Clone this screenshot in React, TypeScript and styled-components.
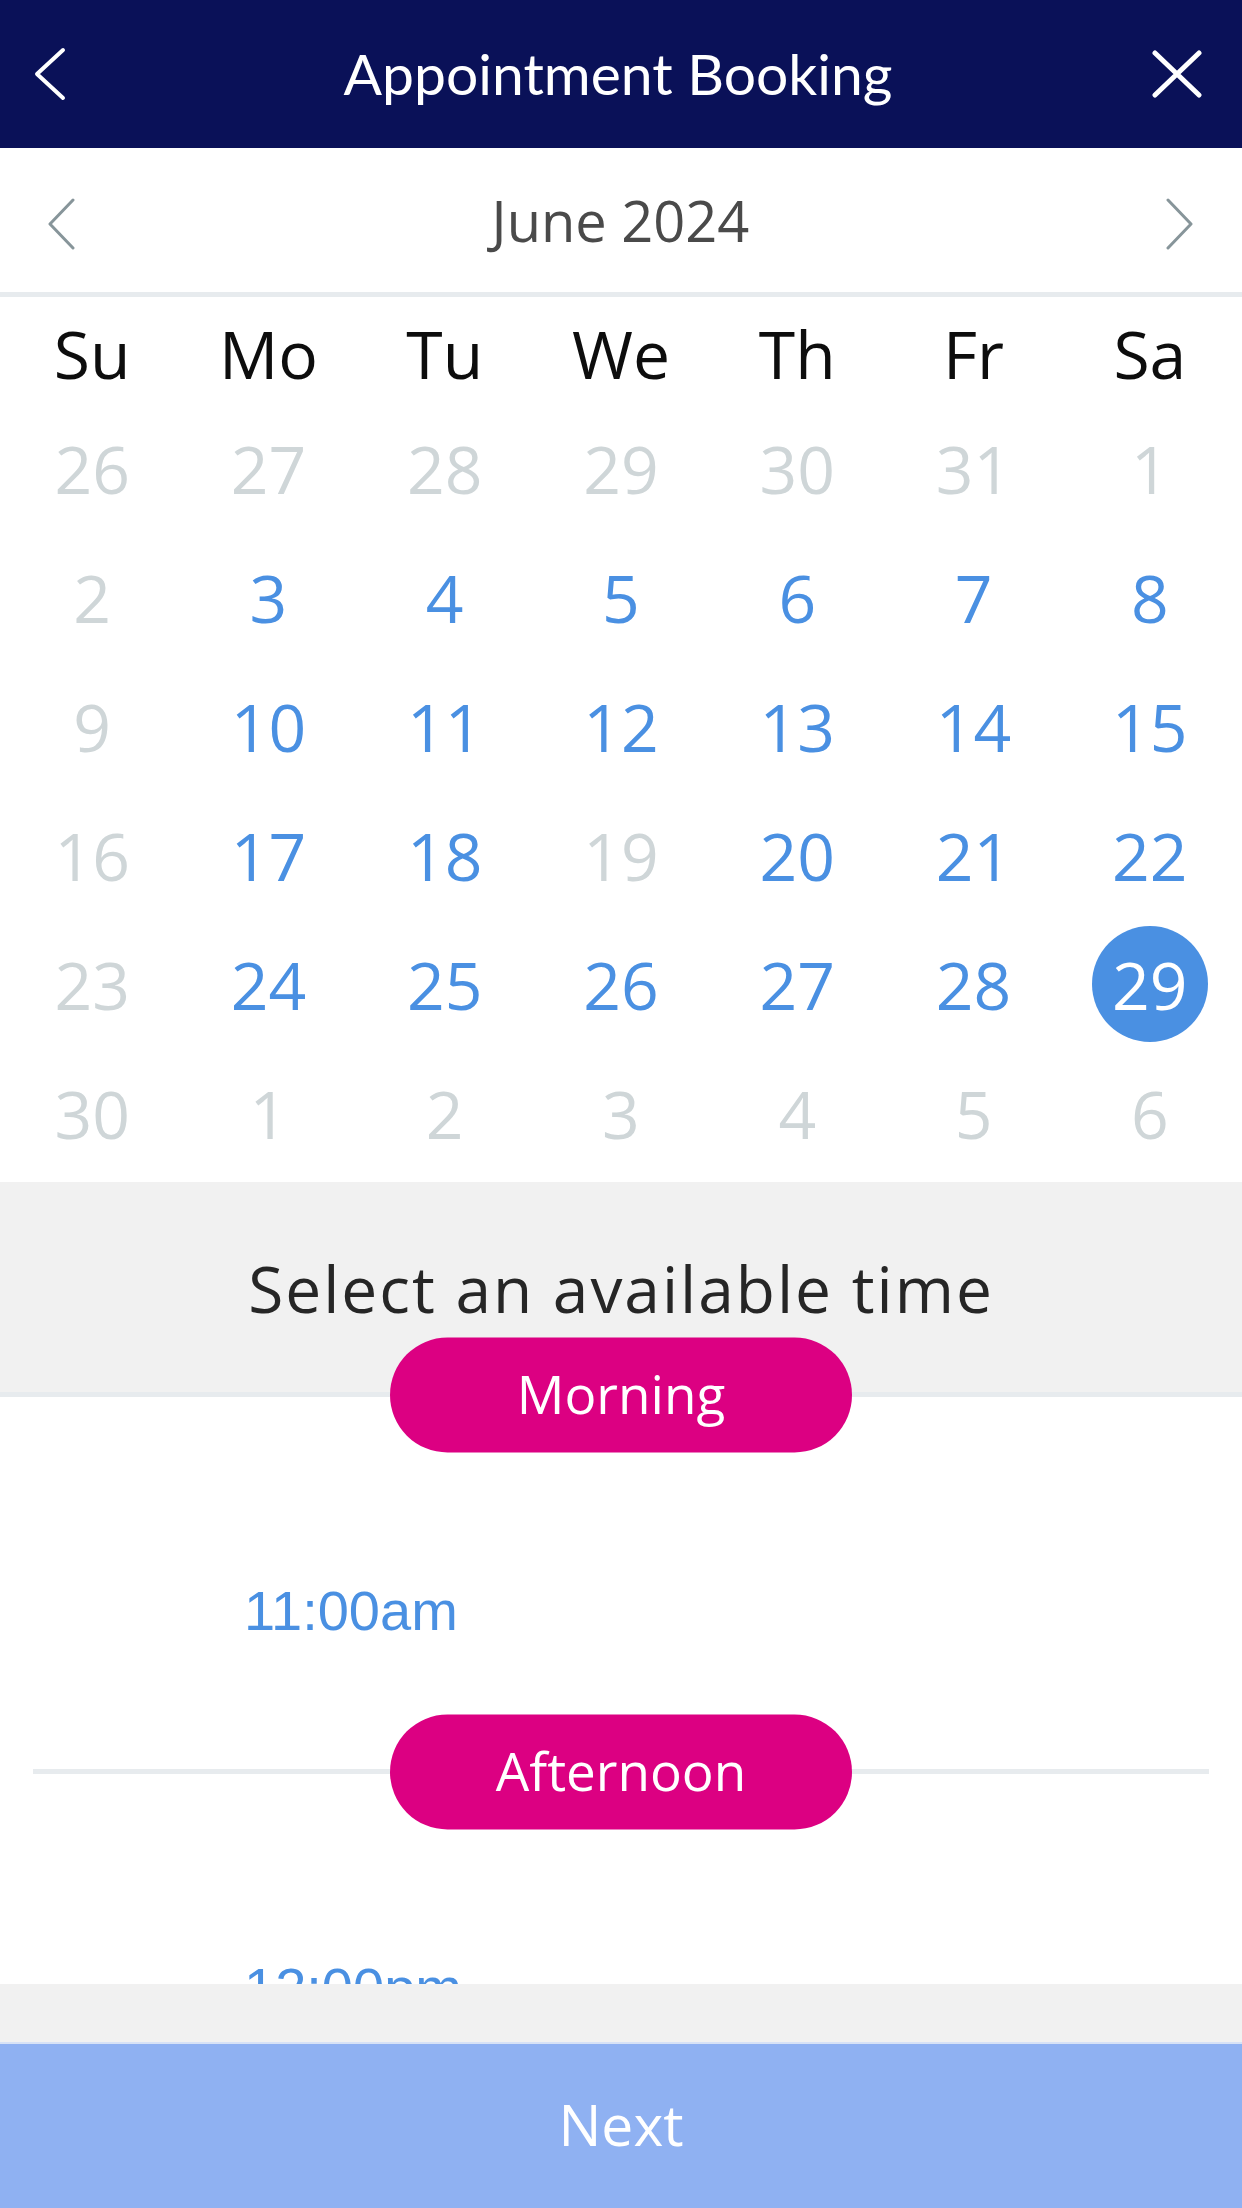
import React from "react";
import styled, { createGlobalStyle } from "styled-components";

const GlobalStyle = createGlobalStyle`
  html, body { margin: 0; padding: 0; background: #ffffff; }
  body { font-family: "Open Sans", "Liberation Sans", sans-serif; }
  * { box-sizing: border-box; }
`;

const Screen = styled.div`
  width: 1242px;
  height: 2208px;
  display: flex;
  flex-direction: column;
  overflow: hidden;
  background: #ffffff;
`;

const Header = styled.header`
  height: 148px;
  flex: none;
  background: #0a1158;
  display: grid;
  grid-template-columns: 60px 1fr 60px;
  align-items: center;
  padding: 0 40px 0 34px;
`;

const HeaderTitle = styled.h1`
  margin: 0;
  text-align: center;
  color: #ffffff;
  font-family: "Lato", "Open Sans", sans-serif;
  font-weight: 400;
  font-size: 57px;
  line-height: 1;
  padding-bottom: 2px;
`;

const IconButton = styled.button<{ $align: "start" | "end" }>`
  border: 0;
  background: transparent;
  padding: 0;
  display: flex;
  justify-content: ${(p) => (p.$align === "start" ? "flex-start" : "flex-end")};
  align-items: center;
  cursor: pointer;
`;

const MonthBar = styled.div`
  height: 149px;
  flex: none;
  display: flex;
  align-items: center;
  justify-content: space-between;
  padding: 8px 48px 0 47px;
  border-bottom: 5px solid #e7ebee;
`;

const MonthLabel = styled.div`
  font-size: 56px;
  color: #4a4a4a;
  line-height: 1;
  padding-bottom: 8px;
`;

const CalendarGrid = styled.div`
  flex: none;
  height: 885px;
  display: grid;
  grid-template-columns: repeat(7, 1fr);
  grid-template-rows: 100px repeat(6, 129px);
  padding: 6px 4px 0 4px;
`;

const Weekday = styled.div`
  display: flex;
  align-items: center;
  justify-content: center;
  font-size: 66px;
  color: #0d0d0d;
  line-height: 1;
`;

const DayCell = styled.div`
  display: flex;
  align-items: center;
  justify-content: center;
`;

const DayNumber = styled.span<{ $state: "muted" | "open" | "selected" }>`
  width: 116px;
  height: 116px;
  border-radius: 50%;
  display: flex;
  align-items: center;
  justify-content: center;
  font-size: 66px;
  line-height: 1;
  color: ${(p) =>
    p.$state === "muted" ? "#cfd6d8" : p.$state === "open" ? "#4a90e2" : "#ffffff"};
  background: ${(p) => (p.$state === "selected" ? "#4a90e2" : "transparent")};
`;

const SelectPanel = styled.div`
  flex: none;
  height: 210px;
  background: #f1f1f1;
  display: flex;
  align-items: center;
  justify-content: center;
  padding-top: 4px;
`;

const SelectTitle = styled.h2`
  margin: 0;
  font-weight: 400;
  font-size: 64px;
  letter-spacing: 2px;
  color: #262626;
  line-height: 1;
`;

const Divider = styled.div<{ $inset: number }>`
  position: relative;
  flex: none;
  height: 5px;
  margin: 0 ${(p) => p.$inset}px;
  background: #e7ebee;
  z-index: 2;
`;

const PeriodPill = styled.div`
  position: absolute;
  left: 50%;
  top: 50%;
  transform: translate(-50%, -50%);
  width: 462px;
  height: 115px;
  border-radius: 58px;
  background: #dc0082;
  color: #ffffff;
  font-size: 53px;
  line-height: 1;
  display: flex;
  align-items: center;
  justify-content: center;
  padding-bottom: 4px;
`;

const SlotViewport = styled.div`
  flex: none;
  height: 587px;
  overflow: hidden;
  display: flex;
  flex-direction: column;
`;

const SlotList = styled.div`
  flex: none;
  display: flex;
  flex-direction: column;
  padding: 186px 0 130px 244px;
`;

const Slot = styled.div`
  font-family: "Liberation Sans", Arial, sans-serif;
  font-size: 56px;
  line-height: 56px;
  color: #4a90e2;
`;

const Footer = styled.div`
  flex: none;
  height: 224px;
  background: #f1f1f1;
  display: flex;
  flex-direction: column;
  justify-content: flex-end;
`;

const NextButton = styled.button`
  height: 166px;
  border: 0;
  border-top: 2px solid #d7e2f6;
  background: #8fb1f2;
  color: #ffffff;
  font-family: "Open Sans", sans-serif;
  font-size: 57px;
  line-height: 1;
  width: 100%;
  padding: 0 0 4px 0;
`;

const BackIcon = () => (
  <svg width="34" height="54" viewBox="0 0 34 54" fill="none">
    <polyline
      points="29,3 3,27 29,51"
      stroke="#ffffff"
      strokeWidth="4"
      strokeLinecap="round"
      strokeLinejoin="round"
    />
  </svg>
);

const CloseIcon = () => (
  <svg width="50" height="48" viewBox="0 0 50 48" fill="none">
    <path
      d="M3 3 L47 45 M47 3 L3 45"
      stroke="#ffffff"
      strokeWidth="5"
      strokeLinecap="round"
    />
  </svg>
);

const Chevron = ({ dir }: { dir: "left" | "right" }) => (
  <svg width="30" height="52" viewBox="0 0 30 52" fill="none">
    <polyline
      points={dir === "left" ? "26,2 3,26 26,50" : "4,2 27,26 4,50"}
      stroke="#87959a"
      strokeWidth="3"
      strokeLinecap="round"
      strokeLinejoin="round"
    />
  </svg>
);

type DayState = "muted" | "open" | "selected";

const weekdays = ["Su", "Mo", "Tu", "We", "Th", "Fr", "Sa"];

const days: { n: number; s: DayState }[] = [
  ...[26, 27, 28, 29, 30, 31].map((n) => ({ n, s: "muted" as DayState })),
  { n: 1, s: "muted" },
  { n: 2, s: "muted" },
  ...[3, 4, 5, 6, 7, 8].map((n) => ({ n, s: "open" as DayState })),
  { n: 9, s: "muted" },
  ...[10, 11, 12, 13, 14, 15].map((n) => ({ n, s: "open" as DayState })),
  { n: 16, s: "muted" },
  { n: 17, s: "open" },
  { n: 18, s: "open" },
  { n: 19, s: "muted" },
  { n: 20, s: "open" },
  { n: 21, s: "open" },
  { n: 22, s: "open" },
  { n: 23, s: "muted" },
  ...[24, 25, 26, 27, 28].map((n) => ({ n, s: "open" as DayState })),
  { n: 29, s: "selected" },
  ...[30, 1, 2, 3, 4, 5, 6].map((n) => ({ n, s: "muted" as DayState })),
];

export default function App() {
  return (
    <>
      <GlobalStyle />
      <Screen>
        <Header>
          <IconButton $align="start" aria-label="Back">
            <BackIcon />
          </IconButton>
          <HeaderTitle>Appointment Booking</HeaderTitle>
          <IconButton $align="end" aria-label="Close">
            <CloseIcon />
          </IconButton>
        </Header>

        <MonthBar>
          <Chevron dir="left" />
          <MonthLabel>June 2024</MonthLabel>
          <Chevron dir="right" />
        </MonthBar>

        <CalendarGrid>
          {weekdays.map((w) => (
            <Weekday key={w}>{w}</Weekday>
          ))}
          {days.map((d, i) => (
            <DayCell key={i}>
              <DayNumber $state={d.s}>{d.n}</DayNumber>
            </DayCell>
          ))}
        </CalendarGrid>

        <SelectPanel>
          <SelectTitle>Select an available time</SelectTitle>
        </SelectPanel>

        <Divider $inset={0}>
          <PeriodPill>Morning</PeriodPill>
        </Divider>

        <SlotViewport>
          <SlotList>
            <Slot>11:00am</Slot>
          </SlotList>
          <Divider $inset={33}>
            <PeriodPill>Afternoon</PeriodPill>
          </Divider>
          <SlotList>
            <Slot>12:00pm</Slot>
          </SlotList>
        </SlotViewport>

        <Footer>
          <NextButton>Next</NextButton>
        </Footer>
      </Screen>
    </>
  );
}
